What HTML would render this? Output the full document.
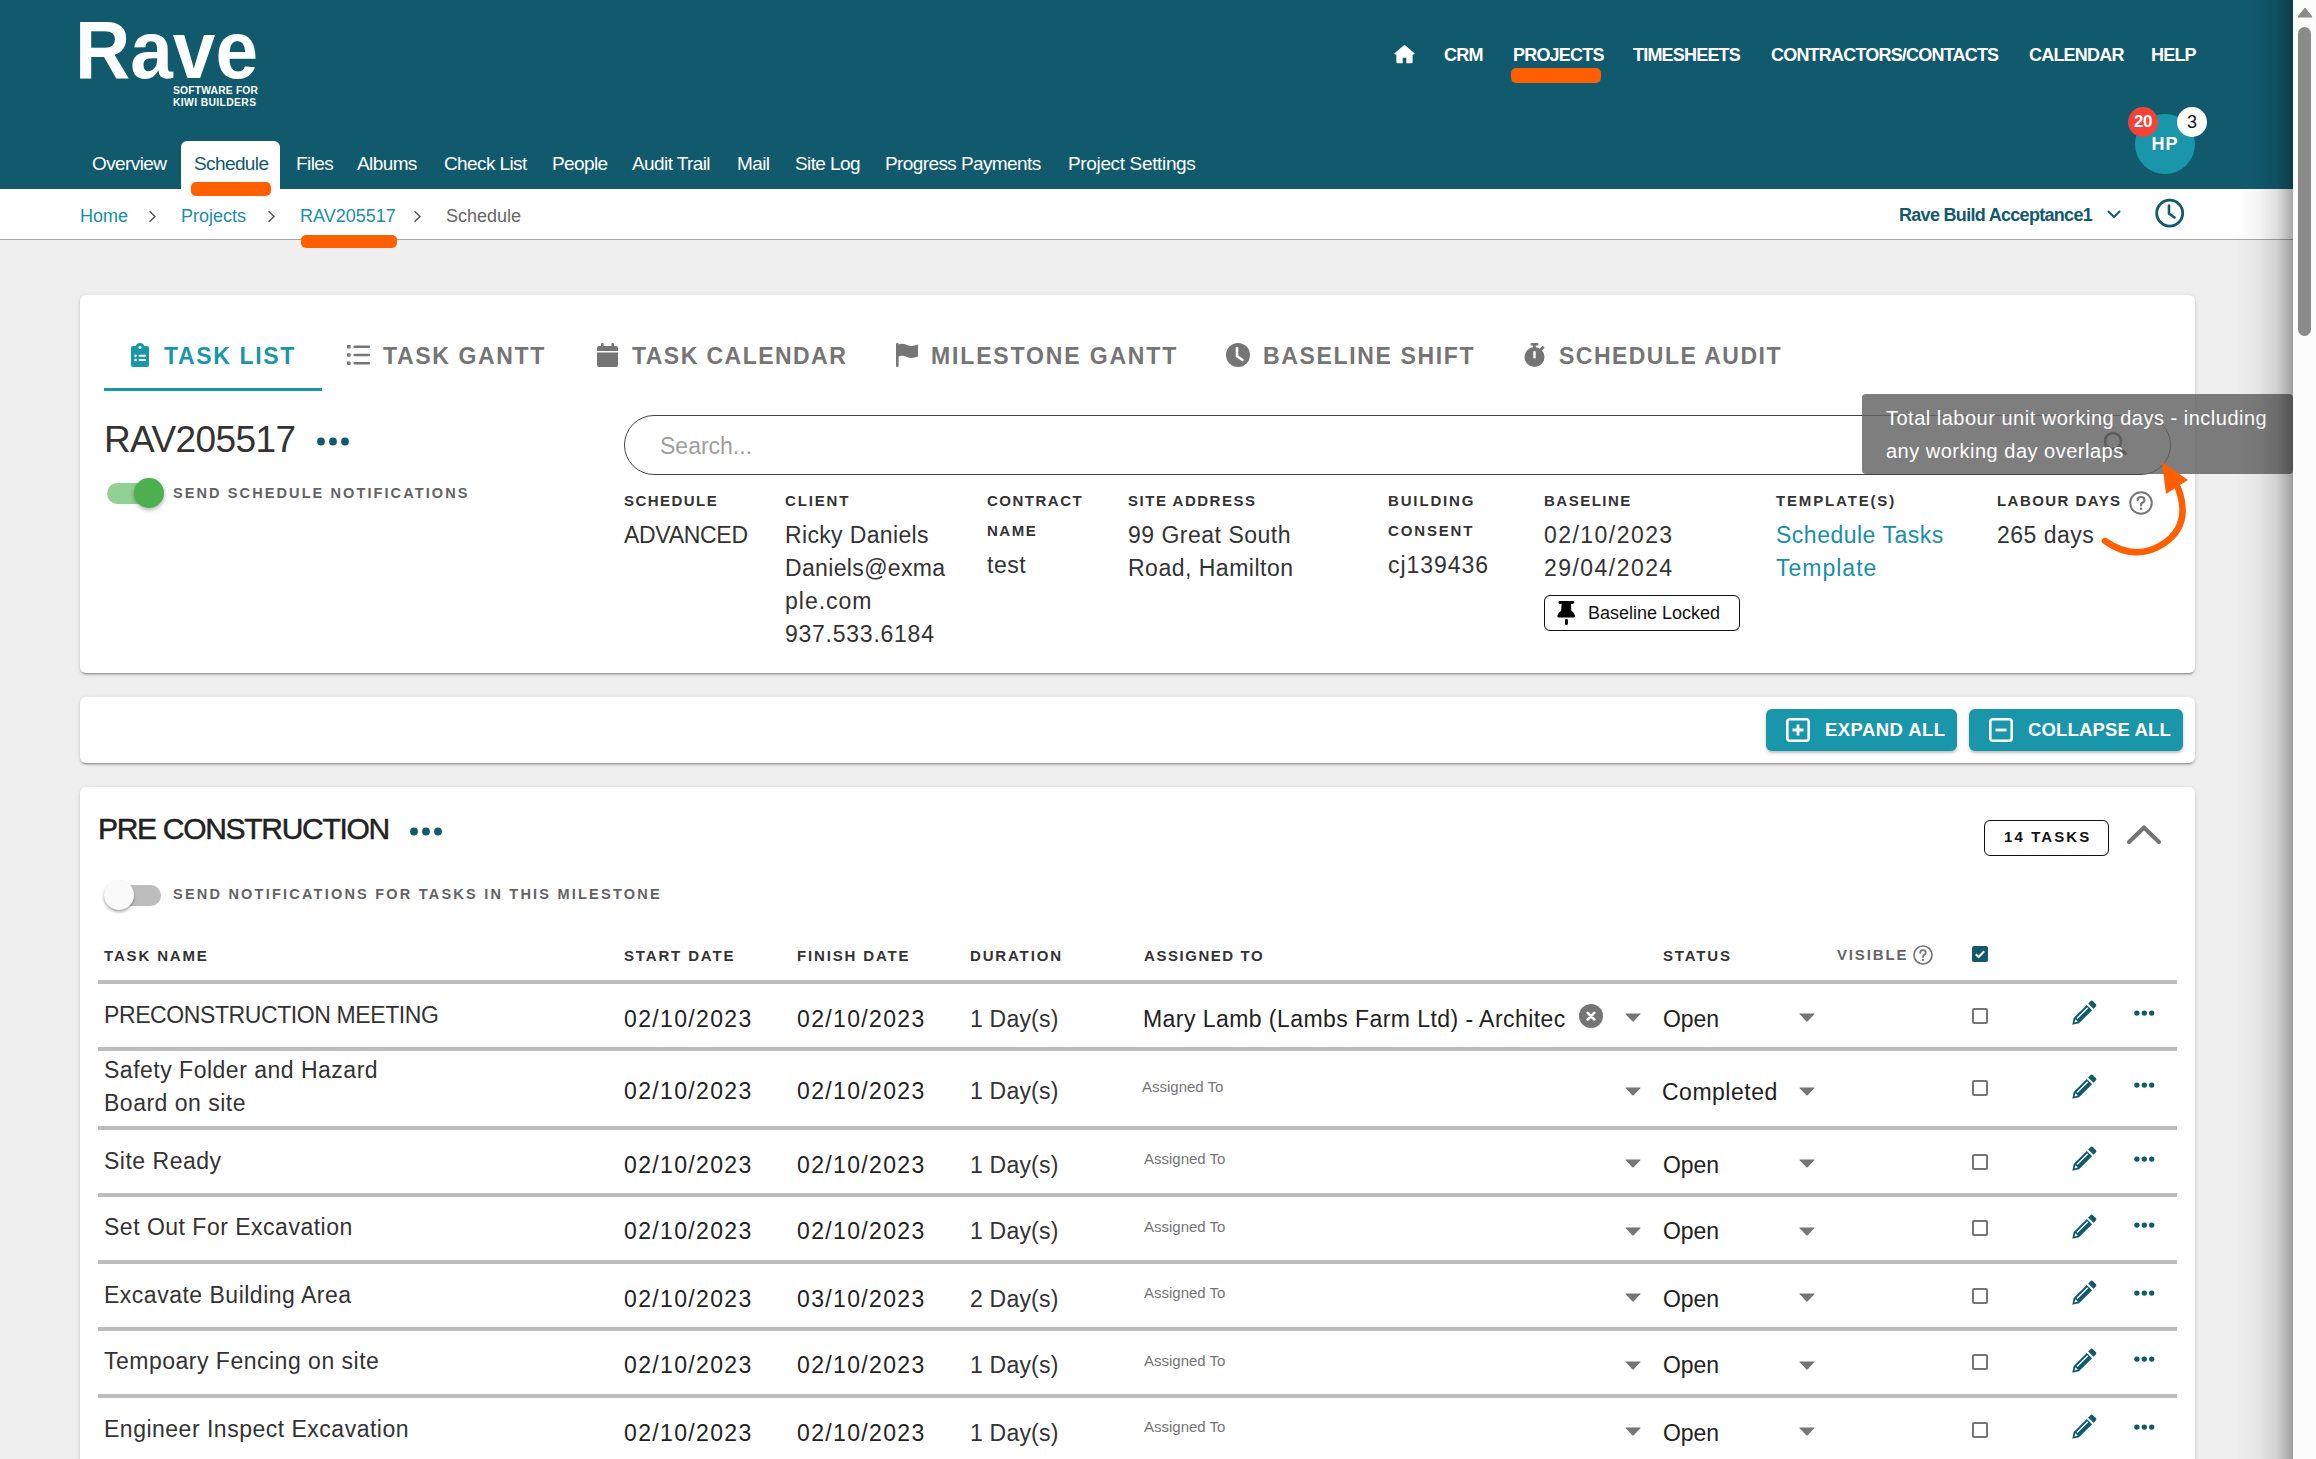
<!DOCTYPE html>
<html><head><meta charset="utf-8">
<style>
*{margin:0;padding:0;box-sizing:border-box}
html,body{width:2316px;height:1459px;overflow:hidden;background:#efefef;font-family:"Liberation Sans",sans-serif;color:#333}
.a{position:absolute;white-space:nowrap}
#hdr{position:absolute;left:0;top:0;width:2293px;height:189px;background:#115a6e}
.nav1{position:absolute;top:45px;font-size:18px;font-weight:bold;color:#fff;line-height:20px;letter-spacing:-0.8px}
.nav2{position:absolute;top:153px;font-size:19px;color:#fff;line-height:22px;letter-spacing:-0.6px}
.orange{position:absolute;background:#ff5f00;border-radius:5px}
#bc{position:absolute;left:0;top:189px;width:2293px;height:51px;background:#fff;border-bottom:1px solid #a8a8a8}
.bct{position:absolute;top:205px;font-size:18px;line-height:22px;color:#1a8ea6}
.bcc{position:absolute;top:205px;font-size:18px;line-height:22px;color:#666}
.card{position:absolute;left:80px;width:2115px;background:#fff;border-radius:6px;box-shadow:0 3px 1px -2px rgba(0,0,0,.2),0 2px 2px 0 rgba(0,0,0,.14),0 1px 5px 0 rgba(0,0,0,.12)}
.tab{position:absolute;top:343px;font-size:23px;font-weight:bold;color:#757575;letter-spacing:1.65px;line-height:26px}
.lbl{font-size:14.5px;font-weight:bold;letter-spacing:2.1px;line-height:16px}
.lbl2{position:absolute;font-size:15px;font-weight:bold;letter-spacing:1.85px;line-height:16px;color:#333}
.val{position:absolute;font-size:23px;line-height:33px;color:#333;letter-spacing:0.5px;margin-top:3px}
.dg{letter-spacing:1.45px}
.btn{top:709px;height:42px;background:#1a96aa;border-radius:6px;box-shadow:0 2px 3px rgba(0,0,0,0.25)}
.btnt{top:720px;font-size:18.5px;font-weight:bold;letter-spacing:0.8px;line-height:20px;color:#fff}
.th{position:absolute;top:948px;font-size:15px;font-weight:bold;letter-spacing:1.85px;line-height:16px;color:#333}
.hr{position:absolute;left:98px;width:2079px;height:4px;background:#bdbdbd}
.td{position:absolute;font-size:23px;line-height:33px;color:#333;letter-spacing:0.5px;margin-top:3px}
.dy{letter-spacing:0.2px}
.dt{letter-spacing:1.35px;color:#222}
.asg{position:absolute;font-size:15px;line-height:18px;color:#757575}
.cb{position:absolute;width:16px;height:16px;border:2px solid #757575;border-radius:2px}
</style></head><body>
<div id="hdr"></div>
<!-- logo -->
<svg class="a" style="left:0;top:0" width="300" height="120" viewBox="0 0 300 120"><text x="75" y="78" font-family="Liberation Sans" font-weight="bold" font-size="81" fill="#fff" textLength="183" lengthAdjust="spacingAndGlyphs">Rave</text></svg>
<svg class="a" style="left:0;top:0" width="300" height="120" viewBox="0 0 300 120"><text x="173" y="94" font-family="Liberation Sans" font-weight="bold" font-size="10.3" fill="#fff" textLength="85" lengthAdjust="spacing">SOFTWARE FOR</text><text x="173" y="105.8" font-family="Liberation Sans" font-weight="bold" font-size="10.3" fill="#fff" textLength="83" lengthAdjust="spacing">KIWI BUILDERS</text></svg>

<!-- top nav -->
<svg class="a" style="left:1394px;top:44px" width="21" height="20" viewBox="0 0 21 20"><path d="M10.5 0.8 L20.5 9.2 Q21 10 20 10.5 L18.6 10.5 L18.6 18.3 Q18.6 19.3 17.6 19.3 L12.3 19.3 L12.3 13.8 L8.7 13.8 L8.7 19.3 L3.4 19.3 Q2.4 19.3 2.4 18.3 L2.4 10.5 L1 10.5 Q0 10 0.5 9.2 Z" fill="#fff"/></svg>
<div class="nav1" style="left:1444px">CRM</div>
<div class="nav1" style="left:1513px">PROJECTS</div>
<div class="nav1" style="left:1633px">TIMESHEETS</div>
<div class="nav1" style="left:1771px">CONTRACTORS/CONTACTS</div>
<div class="nav1" style="left:2029px">CALENDAR</div>
<div class="nav1" style="left:2151px">HELP</div>
<div class="orange" style="left:1511px;top:68px;width:90px;height:15px"></div>

<!-- avatar -->
<div class="a" style="left:2135px;top:114px;width:60px;height:60px;border-radius:50%;background:#1a96aa"></div>
<div class="a" style="left:2135px;top:134px;width:60px;text-align:center;font-size:18px;font-weight:bold;color:#fff;line-height:20px;letter-spacing:1px">HP</div>
<div class="a" style="left:2128px;top:107px;width:30px;height:30px;border-radius:50%;background:#f44336;color:#fff;font-size:17px;line-height:30px;text-align:center;font-weight:bold;letter-spacing:-0.5px">20</div>
<div class="a" style="left:2177px;top:107px;width:30px;height:30px;border-radius:50%;background:#fff;color:#111;font-size:18px;line-height:30px;text-align:center">3</div>

<!-- nav2 -->
<div class="a" style="left:181px;top:141px;width:99px;height:48px;background:#fff;border-radius:6px 6px 0 0"></div>
<div class="nav2" style="left:92px">Overview</div>
<div class="nav2" style="left:194px;color:#115a6e">Schedule</div>
<div class="nav2" style="left:296px">Files</div>
<div class="nav2" style="left:357px">Albums</div>
<div class="nav2" style="left:444px">Check List</div>
<div class="nav2" style="left:552px">People</div>
<div class="nav2" style="left:632px">Audit Trail</div>
<div class="nav2" style="left:737px">Mail</div>
<div class="nav2" style="left:795px">Site Log</div>
<div class="nav2" style="left:885px">Progress Payments</div>
<div class="nav2" style="left:1068px;letter-spacing:-0.35px">Project Settings</div>

<!-- breadcrumb -->
<div id="bc"></div>
<div class="bct" style="left:80px">Home</div>
<svg class="a" style="left:148px;top:210px" width="9" height="13" viewBox="0 0 9 13"><path d="M1.5 1.2 L7 6.5 L1.5 11.8" stroke="#555" stroke-width="1.5" fill="none"/></svg>
<div class="bct" style="left:181px">Projects</div>
<svg class="a" style="left:267px;top:210px" width="9" height="13" viewBox="0 0 9 13"><path d="M1.5 1.2 L7 6.5 L1.5 11.8" stroke="#555" stroke-width="1.5" fill="none"/></svg>
<div class="bct" style="left:300px">RAV205517</div>
<svg class="a" style="left:413px;top:210px" width="9" height="13" viewBox="0 0 9 13"><path d="M1.5 1.2 L7 6.5 L1.5 11.8" stroke="#555" stroke-width="1.5" fill="none"/></svg>
<div class="bcc" style="left:446px">Schedule</div>
<div class="orange" style="left:182px;top:182px;width:89px;height:14px;left:191px;width:80px"></div>
<div class="orange" style="left:301px;top:235px;width:96px;height:13px"></div>
<div class="a" style="left:1899px;top:204px;font-size:18px;font-weight:bold;color:#115a6e;line-height:22px;letter-spacing:-0.7px">Rave Build Acceptance1</div>


<svg class="a" style="left:2107px;top:210px" width="14" height="9" viewBox="0 0 14 9"><path d="M1.5 1.5 L7 7 L12.5 1.5" stroke="#115a6e" stroke-width="2" fill="none" stroke-linecap="round"/></svg>
<svg class="a" style="left:2154px;top:197px" width="32" height="32" viewBox="0 0 32 32"><circle cx="15.7" cy="16.1" r="13" stroke="#115a6e" stroke-width="2.8" fill="none"/><path d="M15 8.5 L15 16.5 L20.5 20.5" stroke="#115a6e" stroke-width="2.6" fill="none" stroke-linecap="round"/></svg>
<!-- scrollbar -->
<div class="a" style="left:2293px;top:0;width:23px;height:1459px;background:#fcfcfc"></div>
<div class="a" style="left:2298px;top:27px;width:13px;height:309px;border-radius:6.5px;background:#8a8a8a"></div>
<svg class="a" style="left:2297px;top:7px" width="16" height="11" viewBox="0 0 16 11"><path d="M8 1 L15 10 L1 10 Z" fill="#8a8a8a" stroke="#8a8a8a" stroke-width="1" stroke-linejoin="round"/></svg>

<!-- card 1 -->
<div class="card" style="top:295px;height:378px"></div>
<div class="tab" style="left:164px;color:#1a96aa">TASK LIST</div>
<div class="a" style="left:104px;top:388px;width:218px;height:3px;background:#1a96aa"></div>
<div class="tab" style="left:383px">TASK GANTT</div>
<div class="tab" style="left:632px;letter-spacing:1.45px">TASK CALENDAR</div>
<div class="tab" style="left:931px;letter-spacing:1.85px">MILESTONE GANTT</div>
<div class="tab" style="left:1263px">BASELINE SHIFT</div>
<div class="tab" style="left:1559px;letter-spacing:1.47px">SCHEDULE AUDIT</div>


<!-- tab icons -->
<svg class="a" style="left:131px;top:343px" width="18" height="24" viewBox="0 0 18 24"><path d="M0 5 Q0 3 2 3 L4.8 3 Q5.5 0 9 0 Q12.5 0 13.2 3 L16 3 Q18 3 18 5 L18 22 Q18 24 16 24 L2 24 Q0 24 0 22 Z" fill="#1a96aa"/><circle cx="9" cy="4.4" r="1.5" fill="#fff"/><circle cx="4.5" cy="12.8" r="1.3" fill="#fff"/><rect x="7.6" y="11.8" width="7.4" height="2" rx="0.8" fill="#fff"/><circle cx="4.5" cy="17" r="1.3" fill="#fff"/><rect x="7.6" y="16" width="7.4" height="2" rx="0.8" fill="#fff"/></svg>
<svg class="a" style="left:347px;top:345px" width="23" height="20" viewBox="0 0 23 20"><rect x="0" y="0" width="3.6" height="3.6" rx="1" fill="#757575"/><rect x="0" y="8.2" width="3.6" height="3.6" rx="1" fill="#757575"/><rect x="0" y="16.4" width="3.6" height="3.6" rx="1" fill="#757575"/><rect x="6.5" y="0.6" width="16.5" height="2.4" rx="1" fill="#757575"/><rect x="6.5" y="8.8" width="16.5" height="2.4" rx="1" fill="#757575"/><rect x="6.5" y="17" width="16.5" height="2.4" rx="1" fill="#757575"/></svg>
<svg class="a" style="left:597px;top:343px" width="21" height="24" viewBox="0 0 21 24"><rect x="4" y="0" width="2.6" height="5" rx="1" fill="#757575"/><rect x="14.4" y="0" width="2.6" height="5" rx="1" fill="#757575"/><path d="M2 3 L19 3 Q21 3 21 5 L21 8 L0 8 L0 5 Q0 3 2 3Z" fill="#757575"/><path d="M0 9.5 L21 9.5 L21 22 Q21 24 19 24 L2 24 Q0 24 0 22Z" fill="#757575"/></svg>
<svg class="a" style="left:896px;top:343px" width="22" height="24" viewBox="0 0 22 24"><rect x="0" y="0" width="2.6" height="24" rx="1.2" fill="#757575"/><path d="M2 1.5 Q7 0 11 2 Q16 4 22 1.5 L22 13.5 Q16 16 11 14 Q7 12 2 13.5Z" fill="#757575"/></svg>
<svg class="a" style="left:1226px;top:343px" width="24" height="24" viewBox="0 0 24 24"><circle cx="12" cy="12" r="12" fill="#757575"/><path d="M11 5 L11 13 L16.5 17" stroke="#fff" stroke-width="2.6" fill="none" stroke-linecap="round"/></svg>
<svg class="a" style="left:1524px;top:343px" width="21" height="24" viewBox="0 0 21 24"><rect x="6.5" y="0" width="8" height="2.6" rx="1" fill="#757575"/><rect x="9.2" y="1" width="2.6" height="4" fill="#757575"/><circle cx="10.5" cy="14" r="10" fill="#757575"/><rect x="16.5" y="3" width="3" height="5" rx="1" transform="rotate(45 18 5.5)" fill="#757575"/><rect x="9.3" y="8" width="2.4" height="7.5" rx="1" fill="#fff"/></svg>

<!-- title -->
<div class="a" style="left:104px;top:419px;font-size:37px;color:#333;line-height:40px;letter-spacing:-0.6px;top:420px">RAV205517</div>
<svg class="a" style="left:317px;top:437px" width="32" height="9" viewBox="0 0 32 9"><circle cx="4" cy="4.5" r="3.9" fill="#115a6e"/><circle cx="16" cy="4.5" r="3.9" fill="#115a6e"/><circle cx="28" cy="4.5" r="3.9" fill="#115a6e"/></svg>
<!-- toggle on -->
<div class="a" style="left:107px;top:483px;width:56px;height:21px;border-radius:11px;background:#93d095"></div>
<div class="a" style="left:134px;top:478px;width:30px;height:30px;border-radius:50%;background:#4caf50;box-shadow:0 2px 4px rgba(0,0,0,0.28),0 0 5px rgba(0,0,0,0.08)"></div>
<div class="a lbl" style="left:173px;top:485px;color:#636363">SEND SCHEDULE NOTIFICATIONS</div>

<!-- search -->
<div class="a" style="left:624px;top:415px;width:1547px;height:60px;border:1.3px solid #444;border-radius:30px;background:#fff"></div>
<div class="a" style="left:660px;top:433px;font-size:23px;line-height:26px;color:#9e9e9e">Search...</div>
<svg class="a" style="left:2102px;top:430px" width="26" height="26" viewBox="0 0 26 26"><circle cx="11" cy="11" r="8" stroke="#444" stroke-width="2.6" fill="none"/><path d="M17 17 L23.5 23.5" stroke="#444" stroke-width="3" stroke-linecap="round"/></svg>

<!-- info columns -->
<div class="a lbl2" style="left:624px;top:493px;letter-spacing:1.45px">SCHEDULE</div>
<div class="a val" style="left:624px;top:516px;letter-spacing:-0.3px">ADVANCED</div>
<div class="a lbl2" style="left:785px;top:493px">CLIENT</div>
<div class="a val" style="left:785px;top:516px;letter-spacing:0.35px">Ricky Daniels<br>Daniels@exma<br><span style="letter-spacing:1px">ple.com</span><br><span style="letter-spacing:0.75px">937.533.6184</span></div>
<div class="a lbl2" style="left:987px;line-height:30px;top:486px;letter-spacing:1.5px">CONTRACT<br>NAME</div>
<div class="a val" style="left:987px;top:546px">test</div>
<div class="a lbl2" style="left:1128px;top:493px;letter-spacing:1.52px">SITE ADDRESS</div>
<div class="a val" style="left:1128px;top:516px">99 Great South<br>Road, Hamilton</div>
<div class="a lbl2" style="left:1388px;top:486px;line-height:30px">BUILDING<br>CONSENT</div>
<div class="a val" style="left:1388px;top:546px;letter-spacing:0.95px">cj139436</div>
<div class="a lbl2" style="left:1544px;top:493px;letter-spacing:1.5px">BASELINE</div>
<div class="a val dg" style="left:1544px;top:516px">02/10/2023<br>29/04/2024</div>
<div class="a" style="left:1544px;top:595px;width:196px;height:36px;border:1.5px solid #111;border-radius:6px;background:#fff"></div>
<svg class="a" style="left:1557px;top:601px" width="19" height="24" viewBox="0 0 19 24"><path d="M2.8 0 L15.9 0 Q17.3 0 17.3 1.45 Q17.3 2.9 15.9 2.9 L14 2.9 L14.3 9.5 Q17.5 11.8 18.1 15 Q18.2 16.4 16.8 16.4 L1.4 16.4 Q0 16.4 0.3 15 Q1 11.8 4.2 9.5 L4.6 2.9 L2.8 2.9 Q1.4 2.9 1.4 1.45 Q1.4 0 2.8 0 Z" fill="#000"/><rect x="8" y="18.1" width="2.9" height="5.8" rx="1.2" fill="#000"/></svg>
<div class="a" style="left:1588px;top:602px;font-size:18px;line-height:22px;color:#111">Baseline Locked</div>
<div class="a lbl2" style="left:1776px;top:493px">TEMPLATE(S)</div>
<div class="a val" style="left:1776px;top:516px;color:#1a8ea6">Schedule Tasks<br><span style="letter-spacing:1px">Template</span></div>
<div class="a lbl2" style="left:1997px;top:493px;letter-spacing:1.45px">LABOUR DAYS</div>
<svg class="a" style="left:2129px;top:491px" width="24" height="24" viewBox="0 0 24 24"><circle cx="12" cy="12" r="10.8" stroke="#757575" stroke-width="2" fill="none"/><path d="M8.6 9.3 Q8.6 6 12 6 Q15.4 6 15.4 9 Q15.4 11 13 12 Q12 12.6 12 14.5" stroke="#757575" stroke-width="2.1" fill="none" stroke-linecap="round"/><circle cx="12" cy="17.8" r="1.3" fill="#757575"/></svg>
<div class="a val" style="left:1997px;top:516px">265 days</div>


<!-- card 2 -->
<div class="card" style="top:697px;height:66px"></div>
<div class="a btn" style="left:1766px;width:191px"></div>
<svg class="a" style="left:1786px;top:718px" width="24" height="24" viewBox="0 0 24 24"><rect x="1.3" y="1.3" width="21.4" height="21.4" rx="2.5" stroke="#fff" stroke-width="2.6" fill="none"/><path d="M12 6.5 L12 17.5 M6.5 12 L17.5 12" stroke="#fff" stroke-width="2.8"/></svg>
<div class="a btnt" style="left:1825px;letter-spacing:0.43px">EXPAND ALL</div>
<div class="a btn" style="left:1969px;width:214px"></div>
<svg class="a" style="left:1989px;top:718px" width="24" height="24" viewBox="0 0 24 24"><rect x="1.3" y="1.3" width="21.4" height="21.4" rx="2.5" stroke="#fff" stroke-width="2.6" fill="none"/><path d="M6.5 12 L17.5 12" stroke="#fff" stroke-width="2.8"/></svg>
<div class="a btnt" style="left:2028px;letter-spacing:0.15px">COLLAPSE ALL</div>

<!-- card 3 -->
<div class="card" style="top:787px;height:700px"></div>
<div class="a" style="left:98px;top:812px;font-size:30px;line-height:34px;color:#222;letter-spacing:-1.3px;-webkit-text-stroke:0.5px #222">PRE CONSTRUCTION</div>
<svg class="a" style="left:410px;top:827px" width="32" height="9" viewBox="0 0 32 9"><circle cx="4" cy="4.5" r="3.9" fill="#115a6e"/><circle cx="16" cy="4.5" r="3.9" fill="#115a6e"/><circle cx="28" cy="4.5" r="3.9" fill="#115a6e"/></svg>
<div class="a" style="left:1984px;top:820px;width:125px;height:36px;border:1.5px solid #111;border-radius:6px"></div>
<div class="a" style="left:2004px;top:829px;font-size:15px;font-weight:bold;letter-spacing:2.1px;line-height:16px;color:#111">14 TASKS</div>
<svg class="a" style="left:2126px;top:824px" width="36" height="22" viewBox="0 0 36 22"><path d="M3 18 L18 3.5 L33 18" stroke="#757575" stroke-width="4.2" fill="none" stroke-linecap="round" stroke-linejoin="round"/></svg>
<!-- toggle off -->
<div class="a" style="left:104px;top:885px;width:57px;height:21px;border-radius:11px;background:#bdbdbd"></div>
<div class="a" style="left:104px;top:880px;width:30px;height:30px;border-radius:50%;background:#fafafa;box-shadow:0 2px 3px rgba(0,0,0,0.35)"></div>
<div class="a lbl" style="left:173px;top:886px;color:#636363;letter-spacing:2.22px">SEND NOTIFICATIONS FOR TASKS IN THIS MILESTONE</div>

<!-- table header -->
<div class="a th" style="left:104px">TASK NAME</div>
<div class="a th" style="left:624px">START DATE</div>
<div class="a th" style="left:797px">FINISH DATE</div>
<div class="a th" style="left:970px">DURATION</div>
<div class="a th" style="left:1144px;letter-spacing:1.55px">ASSIGNED TO</div>
<div class="a th" style="left:1663px">STATUS</div>
<div class="a th" style="left:1837px;color:#666;top:947px">VISIBLE</div>
<svg class="a" style="left:1913px;top:945px" width="20" height="20" viewBox="0 0 24 24"><circle cx="12" cy="12" r="10.8" stroke="#757575" stroke-width="2" fill="none"/><path d="M8.6 9.3 Q8.6 6 12 6 Q15.4 6 15.4 9 Q15.4 11 13 12 Q12 12.6 12 14.5" stroke="#757575" stroke-width="2.1" fill="none" stroke-linecap="round"/><circle cx="12" cy="17.8" r="1.3" fill="#757575"/></svg>
<svg class="a" style="left:1972px;top:946px" width="16" height="16" viewBox="0 0 16 16"><rect x="0" y="0" width="16" height="16" rx="2" fill="#115a6e"/><path d="M3.8 8.2 L6.6 11 L12.2 5.2" stroke="#fff" stroke-width="2" fill="none"/></svg>
<div class="a hr" style="top:980px"></div>
<div class="a td" style="left:104px;top:996px;letter-spacing:-0.4px">PRECONSTRUCTION MEETING</div>
<div class="a td dt" style="left:624px;top:1000px">02/10/2023</div>
<div class="a td dt" style="left:797px;top:1000px">02/10/2023</div>
<div class="a td dy" style="left:970px;top:1000px">1 Day(s)</div>
<div class="a td" style="left:1143px;top:1000px;color:#222;letter-spacing:0.44px">Mary Lamb (Lambs Farm Ltd) - Architec</div>
<svg class="a" style="left:1579px;top:1004px" width="24" height="24" viewBox="0 0 24 24"><circle cx="12" cy="12" r="12" fill="#757575"/><path d="M8.7 8.9 L15.3 15.5 M15.3 8.9 L8.7 15.5" stroke="#fff" stroke-width="2.5" stroke-linecap="round"/></svg>
<svg class="a" style="left:1625px;top:1013px" width="16" height="9" viewBox="0 0 16 9"><path d="M1 0.5 L15 0.5 Q16 0.5 15.3 1.3 L8.7 8.2 Q8 8.9 7.3 8.2 L0.7 1.3 Q0 0.5 1 0.5Z" fill="#757575"/></svg>
<div class="a td" style="left:1663px;top:1000px;color:#222;letter-spacing:-0.1px">Open</div>
<svg class="a" style="left:1799px;top:1013px" width="16" height="9" viewBox="0 0 16 9"><path d="M1 0.5 L15 0.5 Q16 0.5 15.3 1.3 L8.7 8.2 Q8 8.9 7.3 8.2 L0.7 1.3 Q0 0.5 1 0.5Z" fill="#757575"/></svg>
<div class="a cb" style="left:1972px;top:1008px"></div>
<svg class="a" style="left:2072px;top:1000px" width="25" height="25" viewBox="0 0 25 25"><path d="M18.5 1.2 Q19.8 0 21 1.2 L23.8 4 Q25 5.2 23.8 6.5 L21.5 8.8 L16.2 3.5 Z" fill="#115a6e"/><path d="M14.8 4.9 L20.1 10.2 L7 23.3 L0.3 24.7 L1.7 18 Z" fill="#115a6e"/><path d="M3.4 19.2 L2.6 22.4 L5.8 21.6 Z" fill="#fff"/><path d="M5 18.5 L15.8 7.7" stroke="#fff" stroke-width="1.3"/></svg>
<svg class="a" style="left:2134px;top:1010px" width="21" height="7" viewBox="0 0 21 7"><circle cx="2.9" cy="3.1" r="2.7" fill="#115a6e"/><circle cx="10.3" cy="3.1" r="2.7" fill="#115a6e"/><circle cx="17.7" cy="3.1" r="2.7" fill="#115a6e"/></svg>
<div class="a hr" style="top:1047px"></div>
<div class="a td" style="left:104px;top:1051px">Safety Folder and Hazard<br>Board on site</div>
<div class="a td dt" style="left:624px;top:1072px">02/10/2023</div>
<div class="a td dt" style="left:797px;top:1072px">02/10/2023</div>
<div class="a td dy" style="left:970px;top:1072px">1 Day(s)</div>
<div class="a asg" style="left:1142px;top:1078px">Assigned To</div>
<svg class="a" style="left:1625px;top:1087px" width="16" height="9" viewBox="0 0 16 9"><path d="M1 0.5 L15 0.5 Q16 0.5 15.3 1.3 L8.7 8.2 Q8 8.9 7.3 8.2 L0.7 1.3 Q0 0.5 1 0.5Z" fill="#757575"/></svg>
<div class="a td" style="left:1662px;top:1072px;color:#222;letter-spacing:0.5px;margin-top:4px">Completed</div>
<svg class="a" style="left:1799px;top:1087px" width="16" height="9" viewBox="0 0 16 9"><path d="M1 0.5 L15 0.5 Q16 0.5 15.3 1.3 L8.7 8.2 Q8 8.9 7.3 8.2 L0.7 1.3 Q0 0.5 1 0.5Z" fill="#757575"/></svg>
<div class="a cb" style="left:1972px;top:1080px"></div>
<svg class="a" style="left:2072px;top:1074px" width="25" height="25" viewBox="0 0 25 25"><path d="M18.5 1.2 Q19.8 0 21 1.2 L23.8 4 Q25 5.2 23.8 6.5 L21.5 8.8 L16.2 3.5 Z" fill="#115a6e"/><path d="M14.8 4.9 L20.1 10.2 L7 23.3 L0.3 24.7 L1.7 18 Z" fill="#115a6e"/><path d="M3.4 19.2 L2.6 22.4 L5.8 21.6 Z" fill="#fff"/><path d="M5 18.5 L15.8 7.7" stroke="#fff" stroke-width="1.3"/></svg>
<svg class="a" style="left:2134px;top:1082px" width="21" height="7" viewBox="0 0 21 7"><circle cx="2.9" cy="3.1" r="2.7" fill="#115a6e"/><circle cx="10.3" cy="3.1" r="2.7" fill="#115a6e"/><circle cx="17.7" cy="3.1" r="2.7" fill="#115a6e"/></svg>
<div class="a hr" style="top:1126px"></div>
<div class="a td" style="left:104px;top:1142px">Site Ready</div>
<div class="a td dt" style="left:624px;top:1146px">02/10/2023</div>
<div class="a td dt" style="left:797px;top:1146px">02/10/2023</div>
<div class="a td dy" style="left:970px;top:1146px">1 Day(s)</div>
<div class="a asg" style="left:1144px;top:1150px">Assigned To</div>
<svg class="a" style="left:1625px;top:1159px" width="16" height="9" viewBox="0 0 16 9"><path d="M1 0.5 L15 0.5 Q16 0.5 15.3 1.3 L8.7 8.2 Q8 8.9 7.3 8.2 L0.7 1.3 Q0 0.5 1 0.5Z" fill="#757575"/></svg>
<div class="a td" style="left:1663px;top:1146px;color:#222;letter-spacing:-0.1px">Open</div>
<svg class="a" style="left:1799px;top:1159px" width="16" height="9" viewBox="0 0 16 9"><path d="M1 0.5 L15 0.5 Q16 0.5 15.3 1.3 L8.7 8.2 Q8 8.9 7.3 8.2 L0.7 1.3 Q0 0.5 1 0.5Z" fill="#757575"/></svg>
<div class="a cb" style="left:1972px;top:1154px"></div>
<svg class="a" style="left:2072px;top:1146px" width="25" height="25" viewBox="0 0 25 25"><path d="M18.5 1.2 Q19.8 0 21 1.2 L23.8 4 Q25 5.2 23.8 6.5 L21.5 8.8 L16.2 3.5 Z" fill="#115a6e"/><path d="M14.8 4.9 L20.1 10.2 L7 23.3 L0.3 24.7 L1.7 18 Z" fill="#115a6e"/><path d="M3.4 19.2 L2.6 22.4 L5.8 21.6 Z" fill="#fff"/><path d="M5 18.5 L15.8 7.7" stroke="#fff" stroke-width="1.3"/></svg>
<svg class="a" style="left:2134px;top:1156px" width="21" height="7" viewBox="0 0 21 7"><circle cx="2.9" cy="3.1" r="2.7" fill="#115a6e"/><circle cx="10.3" cy="3.1" r="2.7" fill="#115a6e"/><circle cx="17.7" cy="3.1" r="2.7" fill="#115a6e"/></svg>
<div class="a hr" style="top:1193px"></div>
<div class="a td" style="left:104px;top:1208px">Set Out For Excavation</div>
<div class="a td dt" style="left:624px;top:1212px">02/10/2023</div>
<div class="a td dt" style="left:797px;top:1212px">02/10/2023</div>
<div class="a td dy" style="left:970px;top:1212px">1 Day(s)</div>
<div class="a asg" style="left:1144px;top:1218px">Assigned To</div>
<svg class="a" style="left:1625px;top:1227px" width="16" height="9" viewBox="0 0 16 9"><path d="M1 0.5 L15 0.5 Q16 0.5 15.3 1.3 L8.7 8.2 Q8 8.9 7.3 8.2 L0.7 1.3 Q0 0.5 1 0.5Z" fill="#757575"/></svg>
<div class="a td" style="left:1663px;top:1212px;color:#222;letter-spacing:-0.1px">Open</div>
<svg class="a" style="left:1799px;top:1227px" width="16" height="9" viewBox="0 0 16 9"><path d="M1 0.5 L15 0.5 Q16 0.5 15.3 1.3 L8.7 8.2 Q8 8.9 7.3 8.2 L0.7 1.3 Q0 0.5 1 0.5Z" fill="#757575"/></svg>
<div class="a cb" style="left:1972px;top:1220px"></div>
<svg class="a" style="left:2072px;top:1214px" width="25" height="25" viewBox="0 0 25 25"><path d="M18.5 1.2 Q19.8 0 21 1.2 L23.8 4 Q25 5.2 23.8 6.5 L21.5 8.8 L16.2 3.5 Z" fill="#115a6e"/><path d="M14.8 4.9 L20.1 10.2 L7 23.3 L0.3 24.7 L1.7 18 Z" fill="#115a6e"/><path d="M3.4 19.2 L2.6 22.4 L5.8 21.6 Z" fill="#fff"/><path d="M5 18.5 L15.8 7.7" stroke="#fff" stroke-width="1.3"/></svg>
<svg class="a" style="left:2134px;top:1222px" width="21" height="7" viewBox="0 0 21 7"><circle cx="2.9" cy="3.1" r="2.7" fill="#115a6e"/><circle cx="10.3" cy="3.1" r="2.7" fill="#115a6e"/><circle cx="17.7" cy="3.1" r="2.7" fill="#115a6e"/></svg>
<div class="a hr" style="top:1260px"></div>
<div class="a td" style="left:104px;top:1276px">Excavate Building Area</div>
<div class="a td dt" style="left:624px;top:1280px">02/10/2023</div>
<div class="a td dt" style="left:797px;top:1280px">03/10/2023</div>
<div class="a td dy" style="left:970px;top:1280px">2 Day(s)</div>
<div class="a asg" style="left:1144px;top:1284px">Assigned To</div>
<svg class="a" style="left:1625px;top:1293px" width="16" height="9" viewBox="0 0 16 9"><path d="M1 0.5 L15 0.5 Q16 0.5 15.3 1.3 L8.7 8.2 Q8 8.9 7.3 8.2 L0.7 1.3 Q0 0.5 1 0.5Z" fill="#757575"/></svg>
<div class="a td" style="left:1663px;top:1280px;color:#222;letter-spacing:-0.1px">Open</div>
<svg class="a" style="left:1799px;top:1293px" width="16" height="9" viewBox="0 0 16 9"><path d="M1 0.5 L15 0.5 Q16 0.5 15.3 1.3 L8.7 8.2 Q8 8.9 7.3 8.2 L0.7 1.3 Q0 0.5 1 0.5Z" fill="#757575"/></svg>
<div class="a cb" style="left:1972px;top:1288px"></div>
<svg class="a" style="left:2072px;top:1280px" width="25" height="25" viewBox="0 0 25 25"><path d="M18.5 1.2 Q19.8 0 21 1.2 L23.8 4 Q25 5.2 23.8 6.5 L21.5 8.8 L16.2 3.5 Z" fill="#115a6e"/><path d="M14.8 4.9 L20.1 10.2 L7 23.3 L0.3 24.7 L1.7 18 Z" fill="#115a6e"/><path d="M3.4 19.2 L2.6 22.4 L5.8 21.6 Z" fill="#fff"/><path d="M5 18.5 L15.8 7.7" stroke="#fff" stroke-width="1.3"/></svg>
<svg class="a" style="left:2134px;top:1290px" width="21" height="7" viewBox="0 0 21 7"><circle cx="2.9" cy="3.1" r="2.7" fill="#115a6e"/><circle cx="10.3" cy="3.1" r="2.7" fill="#115a6e"/><circle cx="17.7" cy="3.1" r="2.7" fill="#115a6e"/></svg>
<div class="a hr" style="top:1327px"></div>
<div class="a td" style="left:104px;top:1342px">Tempoary Fencing on site</div>
<div class="a td dt" style="left:624px;top:1346px">02/10/2023</div>
<div class="a td dt" style="left:797px;top:1346px">02/10/2023</div>
<div class="a td dy" style="left:970px;top:1346px">1 Day(s)</div>
<div class="a asg" style="left:1144px;top:1352px">Assigned To</div>
<svg class="a" style="left:1625px;top:1361px" width="16" height="9" viewBox="0 0 16 9"><path d="M1 0.5 L15 0.5 Q16 0.5 15.3 1.3 L8.7 8.2 Q8 8.9 7.3 8.2 L0.7 1.3 Q0 0.5 1 0.5Z" fill="#757575"/></svg>
<div class="a td" style="left:1663px;top:1346px;color:#222;letter-spacing:-0.1px">Open</div>
<svg class="a" style="left:1799px;top:1361px" width="16" height="9" viewBox="0 0 16 9"><path d="M1 0.5 L15 0.5 Q16 0.5 15.3 1.3 L8.7 8.2 Q8 8.9 7.3 8.2 L0.7 1.3 Q0 0.5 1 0.5Z" fill="#757575"/></svg>
<div class="a cb" style="left:1972px;top:1354px"></div>
<svg class="a" style="left:2072px;top:1348px" width="25" height="25" viewBox="0 0 25 25"><path d="M18.5 1.2 Q19.8 0 21 1.2 L23.8 4 Q25 5.2 23.8 6.5 L21.5 8.8 L16.2 3.5 Z" fill="#115a6e"/><path d="M14.8 4.9 L20.1 10.2 L7 23.3 L0.3 24.7 L1.7 18 Z" fill="#115a6e"/><path d="M3.4 19.2 L2.6 22.4 L5.8 21.6 Z" fill="#fff"/><path d="M5 18.5 L15.8 7.7" stroke="#fff" stroke-width="1.3"/></svg>
<svg class="a" style="left:2134px;top:1356px" width="21" height="7" viewBox="0 0 21 7"><circle cx="2.9" cy="3.1" r="2.7" fill="#115a6e"/><circle cx="10.3" cy="3.1" r="2.7" fill="#115a6e"/><circle cx="17.7" cy="3.1" r="2.7" fill="#115a6e"/></svg>
<div class="a hr" style="top:1394px"></div>
<div class="a td" style="left:104px;top:1410px">Engineer Inspect Excavation</div>
<div class="a td dt" style="left:624px;top:1414px">02/10/2023</div>
<div class="a td dt" style="left:797px;top:1414px">02/10/2023</div>
<div class="a td dy" style="left:970px;top:1414px">1 Day(s)</div>
<div class="a asg" style="left:1144px;top:1418px">Assigned To</div>
<svg class="a" style="left:1625px;top:1427px" width="16" height="9" viewBox="0 0 16 9"><path d="M1 0.5 L15 0.5 Q16 0.5 15.3 1.3 L8.7 8.2 Q8 8.9 7.3 8.2 L0.7 1.3 Q0 0.5 1 0.5Z" fill="#757575"/></svg>
<div class="a td" style="left:1663px;top:1414px;color:#222;letter-spacing:-0.1px">Open</div>
<svg class="a" style="left:1799px;top:1427px" width="16" height="9" viewBox="0 0 16 9"><path d="M1 0.5 L15 0.5 Q16 0.5 15.3 1.3 L8.7 8.2 Q8 8.9 7.3 8.2 L0.7 1.3 Q0 0.5 1 0.5Z" fill="#757575"/></svg>
<div class="a cb" style="left:1972px;top:1422px"></div>
<svg class="a" style="left:2072px;top:1414px" width="25" height="25" viewBox="0 0 25 25"><path d="M18.5 1.2 Q19.8 0 21 1.2 L23.8 4 Q25 5.2 23.8 6.5 L21.5 8.8 L16.2 3.5 Z" fill="#115a6e"/><path d="M14.8 4.9 L20.1 10.2 L7 23.3 L0.3 24.7 L1.7 18 Z" fill="#115a6e"/><path d="M3.4 19.2 L2.6 22.4 L5.8 21.6 Z" fill="#fff"/><path d="M5 18.5 L15.8 7.7" stroke="#fff" stroke-width="1.3"/></svg>
<svg class="a" style="left:2134px;top:1424px" width="21" height="7" viewBox="0 0 21 7"><circle cx="2.9" cy="3.1" r="2.7" fill="#115a6e"/><circle cx="10.3" cy="3.1" r="2.7" fill="#115a6e"/><circle cx="17.7" cy="3.1" r="2.7" fill="#115a6e"/></svg>
<div class="a hr" style="top:1461px"></div>

<!-- tooltip -->
<div class="a" style="left:1862px;top:394px;width:431px;height:80px;border-radius:4px;background:rgba(97,97,97,0.82)"></div>
<div class="a" style="left:1886px;top:402px;font-size:20px;line-height:33px;color:#fff;letter-spacing:0.5px">Total labour unit working days - including<br>any working day overlaps</div>
<svg class="a" style="left:2095px;top:455px" width="100" height="105" viewBox="2095 455 100 105"><path d="M2105 541 Q2135 562 2163 544 Q2192 525 2178 488" stroke="#ff5f00" stroke-width="6.5" fill="none" stroke-linecap="round"/><path d="M2162 462 L2188 480 L2166 494 Z" fill="#ff5f00"/></svg>

<!-- scrollbar shadow -->
<div class="a" style="left:2236px;top:0;width:57px;height:1459px;background:linear-gradient(to right,rgba(0,0,0,0) 0%,rgba(0,0,0,0.04) 40%,rgba(0,0,0,0.13) 72%,rgba(0,0,0,0.34) 100%)"></div>


</body></html>
